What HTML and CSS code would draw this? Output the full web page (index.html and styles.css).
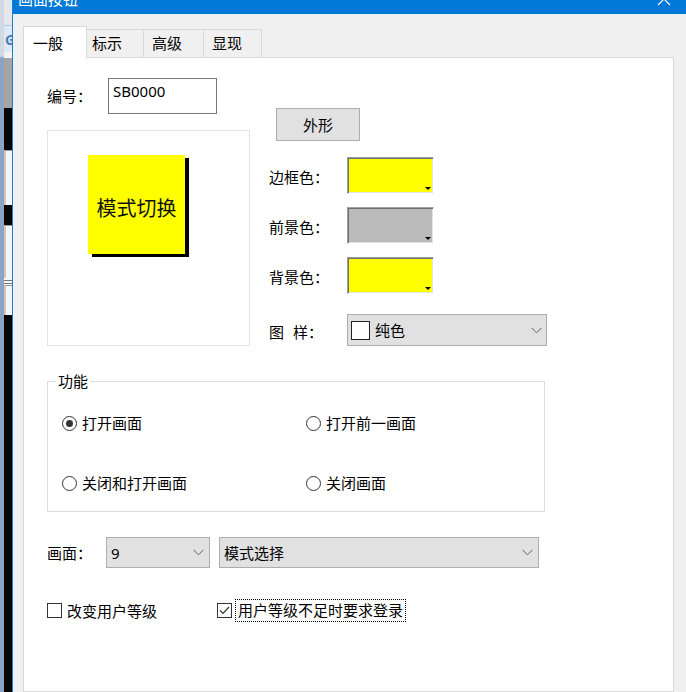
FILE: index.html
```html
<!DOCTYPE html>
<html lang="zh">
<head>
  <meta charset="UTF-8">
  <title>画面按钮</title>
  <link rel="stylesheet" href="styles.css">
</head>
<body>
  <div class="screen">
    <div class="backdrop">
      <div class="backdrop-edge"></div>
      <div class="backdrop-strip">
        <div class="bd bd-top"></div>
        <div class="bd bd-tool">G</div>
        <div class="bd bd-line"></div>
        <div class="bd bd-grey"></div>
        <div class="bd bd-black" style="height:42px"></div>
        <div class="bd bd-white" style="height:55px"></div>
        <div class="bd bd-black" style="height:20px"></div>
        <div class="bd bd-white" style="height:53px"></div>
        <div class="bd bd-rule"></div>
        <div class="bd bd-white" style="height:30px"></div>
        <div class="bd bd-black bd-fill"></div>
      </div>
    </div>

    <div class="dialog">
      <div class="titlebar">
        <span class="title">画面按钮</span>
        <svg class="close" width="14" height="14" viewBox="0 0 14 14">
          <path d="M1 1 L13 13 M13 1 L1 13" stroke="#fff" stroke-width="1.2" fill="none"/>
        </svg>
      </div>

      <div class="dialog-body">
        <div class="tabs">
          <div class="tab active">一般</div>
          <div class="tab tab-narrow">标示</div>
          <div class="tab" style="width:61px">高级</div>
          <div class="tab" style="width:59px">显现</div>
        </div>

        <div class="panel">
          <div class="top">
            <div class="left-col">
              <div class="id-row">
                <span class="id-label">编号<span class="colon">：</span></span>
                <div class="id-input">SB0000</div>
              </div>
              <div class="preview">
                <div class="sample">模式切换</div>
              </div>
            </div>

            <div class="right-col">
              <button class="shape-btn">外形</button>

              <div class="color-row">
                <span class="row-label">边框色<span class="colon">：</span></span>
                <div class="color-box" style="background:#ffff00"><span class="arrow"></span></div>
              </div>
              <div class="color-row">
                <span class="row-label">前景色<span class="colon">：</span></span>
                <div class="color-box" style="background:#bababa"><span class="arrow"></span></div>
              </div>
              <div class="color-row">
                <span class="row-label">背景色<span class="colon">：</span></span>
                <div class="color-box" style="background:#ffff00"><span class="arrow"></span></div>
              </div>

              <div class="pattern-row">
                <span class="row-label"><span class="spread">图</span>样<span class="colon">：</span></span>
                <div class="select pattern-select">
                  <span class="swatch"></span>
                  <span>纯色</span>
                  <svg class="chevron" width="11" height="7" viewBox="0 0 11 7"><path d="M0.5 0.8 L5.5 5.8 L10.5 0.8" stroke="#606060" fill="none"/></svg>
                </div>
              </div>
            </div>
          </div>

          <fieldset class="func">
            <legend>功能</legend>
            <div class="radio-grid">
              <label class="radio"><span class="radio-dot checked"></span>打开画面</label>
              <label class="radio"><span class="radio-dot"></span>打开前一画面</label>
              <label class="radio"><span class="radio-dot"></span>关闭和打开画面</label>
              <label class="radio"><span class="radio-dot"></span>关闭画面</label>
            </div>
          </fieldset>

          <div class="screen-row">
            <span class="screen-label">画面<span class="colon">：</span></span>
            <div class="select screen-num">
              <span>9</span>
              <svg class="chevron" width="11" height="7" viewBox="0 0 11 7"><path d="M0.5 0.8 L5.5 5.8 L10.5 0.8" stroke="#606060" fill="none"/></svg>
            </div>
            <div class="select screen-name">
              <span>模式选择</span>
              <svg class="chevron" width="11" height="7" viewBox="0 0 11 7"><path d="M0.5 0.8 L5.5 5.8 L10.5 0.8" stroke="#606060" fill="none"/></svg>
            </div>
          </div>

          <div class="check-row">
            <label class="check first">
              <span class="check-box"></span>改变用户等级
            </label>
            <label class="check">
              <span class="check-box">
                <svg width="13" height="13" viewBox="0 0 13 13"><path d="M2 6.5 L5 9.5 L11 3" stroke="#333" stroke-width="1.2" fill="none"/></svg>
              </span>
              <span class="focus">用户等级不足时要求登录</span>
            </label>
          </div>
        </div>
      </div>
    </div>
  </div>
</body>
</html>
```

FILE: styles.css
```css
html, body {
  margin: 0;
}
body {
  width: 686px;
  height: 692px;
  overflow: hidden;
  background-color: #f0f0f0;
  font-family: "Noto Sans", "Noto Sans CJK SC", sans-serif;
  font-size: 15px;
  color: #000;
}
.screen {
  display: flex;
  height: 692px;
}
.colon {
  font-family: "Noto Sans CJK JP", sans-serif;
}

/* background window peeking out on the left */
.backdrop {
  width: 12px;
  flex-shrink: 0;
  display: flex;
}
.backdrop-edge {
  width: 4px;
  background: linear-gradient(#d3d9e2 0, #d3d9e2 56px, #8ea2c2 58px, #8ea2c2 100%);
}
.backdrop-strip {
  width: 8px;
  display: flex;
  flex-direction: column;
  overflow: hidden;
}
.bd {
  flex-shrink: 0;
}
.bd-top {
  height: 25px;
  background-color: #e4e7eb;
}
.bd-tool {
  height: 27px;
  background-color: #dde9f6;
  border-top: 1px solid #b9c9dc;
  box-sizing: border-box;
  color: #4a7db5;
  font-size: 14px;
  font-weight: bold;
  line-height: 28px;
  padding-left: 1px;
}
.bd-line {
  height: 6px;
  background-color: #f2f2f2;
}
.bd-grey {
  height: 50px;
  background-color: #a5a5a5;
}
.bd-black {
  background-color: #050505;
}
.bd-white {
  background-color: #f5f5f5;
  border-left: 2px solid #c8c8c8;
  border-top: 1px solid #9a9a9a;
  box-sizing: border-box;
}
.bd-rule {
  height: 7px;
  background: linear-gradient(#f5f5f5 0, #f5f5f5 2px, #777 2px, #777 3px, #f5f5f5 3px, #f5f5f5 5px, #777 5px, #777 6px, #f5f5f5 6px);
}
.bd-fill {
  flex: 1;
}

/* dialog */
.dialog {
  flex: 1;
  display: flex;
  flex-direction: column;
  border-left: 1px solid #1a7fd4;
}
.titlebar {
  height: 30px;
  margin-top: -16px;
  background-color: #0078d7;
  color: #fff;
  display: flex;
  align-items: center;
  padding: 0 15px 0 5px;
  flex-shrink: 0;
}
.title {
  line-height: 20px;
}
.close {
  margin-left: auto;
}
.dialog-body {
  flex: 1;
  display: flex;
  flex-direction: column;
  padding: 12px 12px 0 10px;
}

.tabs {
  display: flex;
  align-items: flex-end;
  height: 32px;
  margin-bottom: -1px;
  position: relative;
  z-index: 1;
}
.tab {
  box-sizing: border-box;
  height: 28px;
  margin-bottom: 1px;
  margin-left: -1px;
  padding-left: 8px;
  line-height: 27px;
  border: 1px solid #d9d9d9;
  border-bottom: none;
  background-color: #f0f0f0;
}
.tab-narrow {
  width: 58px;
  padding-left: 5px;
}
.tab.active {
  width: 64px;
  height: 32px;
  margin-left: 0;
  margin-bottom: 0;
  padding-top: 3px;
  padding-left: 9px;
  background-color: #fff;
}

.panel {
  flex: 1;
  background-color: #fff;
  border: 1px solid #d9d9d9;
  padding: 20px 0 0 23px;
}

.top {
  display: flex;
  align-items: flex-start;
}
.left-col {
  width: 203px;
}
.id-row {
  display: flex;
  align-items: center;
  height: 36px;
}
.id-label {
  width: 61px;
  line-height: 20px;
}
.id-input {
  box-sizing: border-box;
  width: 109px;
  height: 36px;
  border: 1px solid #7a7a7a;
  padding: 3px 4px;
  line-height: 18px;
}
.preview {
  box-sizing: border-box;
  margin-top: 16px;
  height: 216px;
  border: 1px solid #e3e3e3;
  padding: 24px 0 0 40px;
}
.sample {
  box-sizing: border-box;
  width: 97px;
  height: 99px;
  padding-top: 6px;
  background-color: #ffff00;
  box-shadow: 4px 3px 0 #000;
  display: flex;
  align-items: center;
  justify-content: center;
  font-size: 20px;
  color: #111;
}

.right-col {
  margin-left: 19px;
}
.shape-btn {
  display: block;
  box-sizing: border-box;
  margin: 30px 0 0 7px;
  width: 84px;
  height: 33px;
  padding: 0;
  background-color: #e1e1e1;
  border: 1px solid #adadad;
  font-family: inherit;
  font-size: 15px;
  color: #000;
}
.color-row,
.pattern-row {
  display: flex;
  align-items: center;
}
.color-row {
  margin-top: 13px;
}
.shape-btn + .color-row {
  margin-top: 16px;
}
.row-label {
  width: 78px;
  line-height: 20px;
  padding-top: 3px;
}
.color-box {
  box-sizing: border-box;
  width: 87px;
  height: 37px;
  border: 1px solid;
  border-color: #a0a0a0 #fff #fff #a0a0a0;
  box-shadow: inset 1px 1px 0 #6d6d6d, inset -1px -1px 0 #e3e3e3;
  display: flex;
  align-items: flex-end;
  justify-content: flex-end;
  padding: 0 2px 3px 0;
}
.arrow {
  width: 0;
  height: 0;
  border-left: 3px solid transparent;
  border-right: 3px solid transparent;
  border-top: 3px solid #000;
}
.pattern-row {
  margin-top: 20px;
}
.spread {
  margin-right: 9px;
}

.select {
  box-sizing: border-box;
  display: flex;
  align-items: center;
  background-color: #e1e1e1;
  border: 1px solid #adadad;
  line-height: 20px;
}
.chevron {
  margin-left: auto;
}
.pattern-select {
  width: 200px;
  height: 32px;
  padding: 0 4px 0 3px;
}
.swatch {
  box-sizing: border-box;
  width: 19px;
  height: 19px;
  border: 1.5px solid #222;
  background-color: #fff;
  margin-right: 5px;
}

.func {
  box-sizing: border-box;
  width: 498px;
  margin: 25px 0 0 0;
  padding: 22px 0 18px 0;
  border: 1px solid #dcdcdc;
  min-width: 0;
}
.func legend {
  margin-left: 8px;
  padding: 0 2px;
  line-height: 20px;
}
.radio-grid {
  display: grid;
  grid-template-columns: 244px 1fr;
  row-gap: 40px;
  margin-left: 14px;
}
.radio {
  display: flex;
  align-items: center;
  gap: 5px;
  height: 20px;
  line-height: 20px;
}
.radio-dot {
  box-sizing: border-box;
  width: 15px;
  height: 15px;
  border: 1.5px solid #333;
  border-radius: 50%;
  display: flex;
  align-items: center;
  justify-content: center;
}
.radio-dot.checked::after {
  content: "";
  width: 7px;
  height: 7px;
  border-radius: 50%;
  background-color: #333;
}

.screen-row {
  display: flex;
  align-items: center;
  margin-top: 25px;
}
.screen-label {
  width: 59px;
  line-height: 20px;
}
.screen-num {
  width: 104px;
  height: 31px;
  padding: 0 5px 0 4px;
}
.screen-name {
  width: 320px;
  height: 31px;
  margin-left: 9px;
  padding: 0 5px 0 4px;
}

.check-row {
  display: flex;
  align-items: center;
  height: 23px;
  margin-top: 31px;
}
.check {
  display: flex;
  align-items: center;
  line-height: 20px;
}
.check.first {
  width: 170px;
  gap: 5px;
}
.check-box {
  box-sizing: border-box;
  width: 15px;
  height: 15px;
  border: 1px solid #333;
  display: flex;
  align-items: center;
  justify-content: center;
}
.focus {
  margin-left: 3px;
  padding: 0 2px;
  line-height: 21px;
  border: 1px solid transparent;
  border-style: dotted;
  border-color: #000;
}
```
